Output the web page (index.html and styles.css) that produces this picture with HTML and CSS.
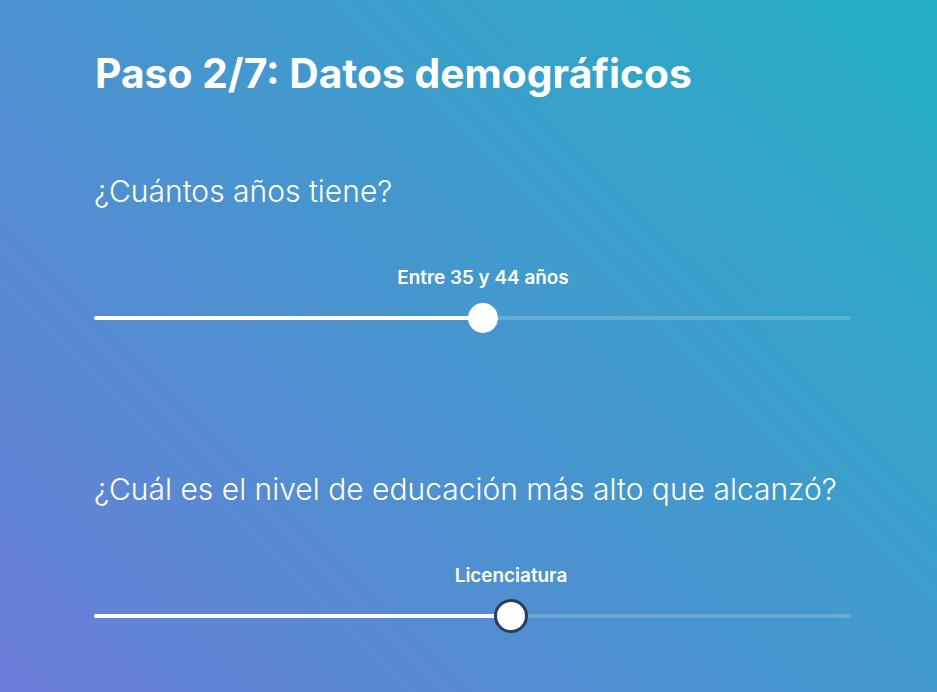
FILE: index.html
```html
<!DOCTYPE html>
<html lang="es">
<head>
<meta charset="utf-8">
<title>Paso 2/7: Datos demográficos</title>
<link rel="stylesheet" href="styles.css">
</head>
<body>
<main class="page">
  <h1 class="step-title">Paso 2/7: Datos demográficos</h1>

  <div class="questions">
    <section class="question">
      <h2 class="question-text">¿Cuántos años tiene?</h2>
      <div class="slider" style="--pos: 0.5144">
        <div class="slider-label"><span>Entre 35 y 44 años</span></div>
        <div class="slider-track">
          <div class="slider-fill"></div>
          <div class="slider-thumb"></div>
        </div>
      </div>
    </section>

    <section class="question">
      <h2 class="question-text">¿Cuál es el nivel de educación más alto que alcanzó?</h2>
      <div class="slider focused" style="--pos: 0.5530">
        <div class="slider-label"><span>Licenciatura</span></div>
        <div class="slider-track">
          <div class="slider-fill"></div>
          <div class="slider-thumb"></div>
        </div>
      </div>
    </section>
  </div>
</main>
</body>
</html>
```
FILE: styles.css
```css
* { box-sizing: border-box; }

html, body {
  margin: 0;
  height: 100%;
}

body {
  background: linear-gradient(45deg, #6b7dd9 0%, #22afc3 100%);
  color: #ffffff;
  font-family: "Inter", "Noto Sans", sans-serif;
  overflow: hidden;
}

.page {
  width: 757px;
  margin-left: 94px;
  padding-top: 49px;
  display: flex;
  flex-direction: column;
}

.step-title {
  margin: 0 0 75px 1px;
  font-size: 40.8px;
  line-height: 49px;
  font-weight: 700;
  letter-spacing: 0;
}

.questions {
  display: flex;
  flex-direction: column;
  gap: 138px;
}

.question {
  display: flex;
  flex-direction: column;
}

.question-text {
  margin: 0 0 57px 0;
  font-size: 30px;
  line-height: 36px;
  font-weight: 300;
}

.slider {
  --thumb: 30px;
  display: flex;
  flex-direction: column;
  gap: 14px;
}

.slider-label {
  padding-left: calc(var(--thumb) / 2 + (100% - var(--thumb)) * var(--pos));
  font-size: 18.9px;
  line-height: 23px;
  font-weight: 600;
  white-space: nowrap;
}

.slider-label span {
  display: inline-block;
  transform: translateX(-50%);
}

.slider-track {
  position: relative;
  height: 30px;
  display: flex;
  align-items: center;
}

.slider-track::before {
  content: "";
  flex: 1;
  height: 4px;
  border-radius: 2px;
  background: rgba(255, 255, 255, 0.18);
}

.slider-fill {
  position: absolute;
  left: 0;
  top: 13px;
  height: 4px;
  border-radius: 2px;
  width: calc(var(--thumb) / 2 + (100% - var(--thumb)) * var(--pos));
  background: #ffffff;
}

.slider-thumb {
  position: absolute;
  top: 0;
  left: calc((100% - var(--thumb)) * var(--pos));
  width: var(--thumb);
  height: var(--thumb);
  border-radius: 50%;
  background: #ffffff;
}

.slider.focused .slider-thumb {
  top: -2px;
  margin-left: -2px;
  width: 34px;
  height: 34px;
  border: 3px solid #2b3d58;
}
```
